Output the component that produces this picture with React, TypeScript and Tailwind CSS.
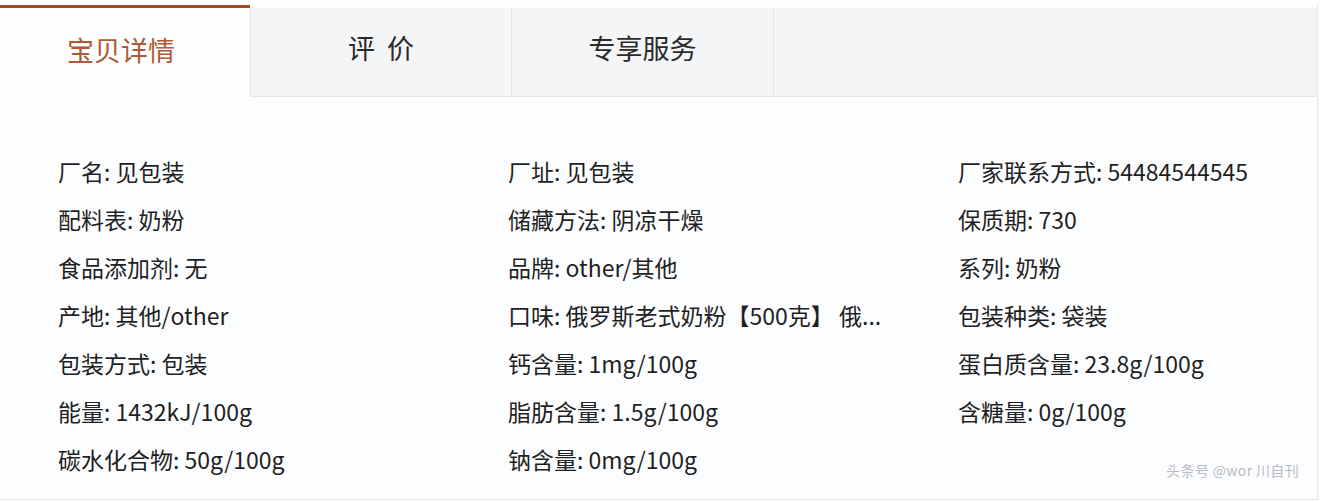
import React from "react";

const tabs = [
  { label: "宝贝详情", width: "w-[250px]" },
  { label: "评  价", width: "w-[261px]" },
  { label: "专享服务", width: "w-[262px]" },
];

const rows: string[][] = [
  ["厂名: 见包装", "厂址: 见包装", "厂家联系方式: 54484544545"],
  ["配料表: 奶粉", "储藏方法: 阴凉干燥", "保质期: 730"],
  ["食品添加剂: 无", "品牌: other/其他", "系列: 奶粉"],
  ["产地: 其他/other", "口味: 俄罗斯老式奶粉【500克】 俄...", "包装种类: 袋装"],
  ["包装方式: 包装", "钙含量: 1mg/100g", "蛋白质含量: 23.8g/100g"],
  ["能量: 1432kJ/100g", "脂肪含量: 1.5g/100g", "含糖量: 0g/100g"],
  ["碳水化合物: 50g/100g", "钠含量: 0mg/100g", ""],
];

const App = () => {
  return (
    <div
      className="w-[1320px] h-[502px] bg-[#fcfdfe] pt-[5px] overflow-hidden"
      style={{ fontFamily: '"Noto Sans CJK SC", "Noto Sans", sans-serif' }}
    >
      <div className="relative h-[495px] border-r border-b border-[#e6e7ea] w-[1318px]">
        {/* tab bar */}
        <div className="flex h-[92px]">
          {tabs.map((tab, i) =>
            i === 0 ? (
              <div
                key={tab.label}
                className={`${tab.width} flex items-center justify-center border-t-[3px] border-[#a44a1d] bg-[#fdfeff] pr-[8px] pb-[4px] text-[27px] text-[#b05a35]`}
              >
                {tab.label}
              </div>
            ) : (
              <div
                key={tab.label}
                className={`${tab.width} mt-[3px] flex items-center justify-center border-l border-b border-[#e4e5e8] bg-[#f4f5f7] pb-[7px] text-[27px] text-[#2a2a2a] whitespace-pre`}
              >
                {tab.label}
              </div>
            )
          )}
          <div className="flex-1 mt-[3px] border-l border-b border-[#e4e5e8] bg-[#f3f5f6]" />
        </div>

        {/* attribute list */}
        <div className="pl-[58px] pt-[50px]">
          {rows.map((row, r) => (
            <div key={r} className="flex h-[48px] items-center">
              {row.map((cell, c) => (
                <div
                  key={c}
                  className={`${c < 2 ? "w-[450px]" : "flex-1"} shrink-0 whitespace-nowrap text-[23px] leading-[48px] text-[#1f1f24]`}
                >
                  {cell}
                </div>
              ))}
            </div>
          ))}
        </div>

        {/* watermark */}
        <div className="absolute right-[18px] bottom-[18px] text-[14px] text-[#b8bcc2] tracking-wide">
          头条号 @wor 川自刊
        </div>
      </div>
    </div>
  );
};

export default App;
